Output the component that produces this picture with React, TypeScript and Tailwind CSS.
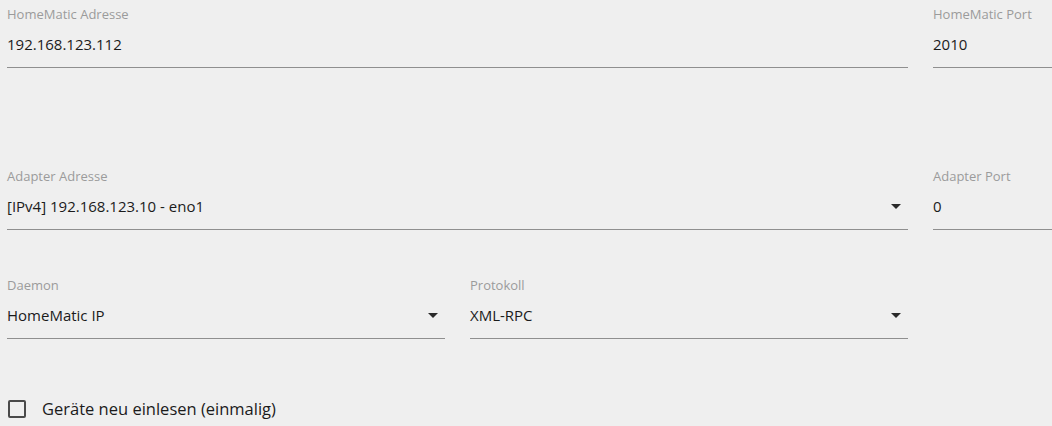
import React from "react";

type FieldProps = {
  label: string;
  value: string;
  select?: boolean;
};

function Field({ label, value, select }: FieldProps) {
  return (
    <div className="flex flex-col">
      <span className="text-[13px] leading-[16px] text-[#9b9b9b]">{label}</span>
      <div className="mt-[12px] flex items-center justify-between border-b border-[#8f8f8f] pb-[13px]">
        <span className="text-[15px] leading-[20px] text-[#1b1b1b]">{value}</span>
        {select && (
          <svg width="10" height="5" viewBox="0 0 10 5" className="mr-[7px]">
            <path d="M0 0 L10 0 L5 5 Z" fill="#2a2a2a" />
          </svg>
        )}
      </div>
    </div>
  );
}

export default function App() {
  return (
    <div
      className="w-[1052px] h-[426px] overflow-hidden bg-[#efefef] pl-[7px] pt-[6px]"
      style={{ fontFamily: '"Open Sans", "Noto Sans", sans-serif' }}
    >
      <div className="w-[1364px]">
        {/* HomeMatic */}
        <div className="grid grid-cols-[901px_438px] gap-x-[25px]">
          <Field label="HomeMatic Adresse" value="192.168.123.112" />
          <Field label="HomeMatic Port" value="2010" />
        </div>

        {/* Adapter */}
        <div className="mt-[100px] grid grid-cols-[901px_438px] gap-x-[25px]">
          <Field label="Adapter Adresse" value="[IPv4] 192.168.123.10 - eno1" select />
          <Field label="Adapter Port" value="0" />
        </div>

        {/* Daemon / Protokoll */}
        <div className="mt-[47px] grid grid-cols-[438px_438px] gap-x-[25px]">
          <Field label="Daemon" value="HomeMatic IP" select />
          <Field label="Protokoll" value="XML-RPC" select />
        </div>

        {/* Checkbox */}
        <label className="mt-[60px] ml-[1px] flex items-center gap-[16px]">
          <span className="h-[18px] w-[18px] rounded-[2px] border-2 border-[#4a4a4a]" />
          <span className="text-[16.5px] leading-[20px] text-[#1b1b1b]">Geräte neu einlesen (einmalig)</span>
        </label>
      </div>
    </div>
  );
}
